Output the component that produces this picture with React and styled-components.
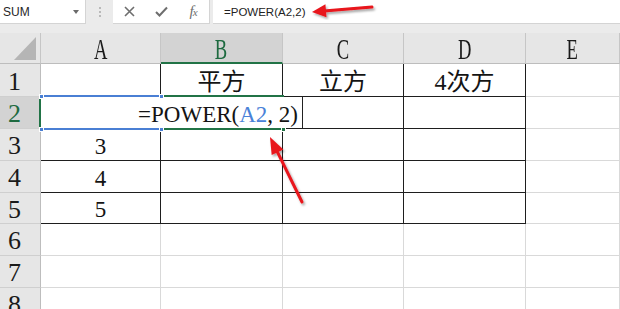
import React from 'react'
import styled, { createGlobalStyle } from 'styled-components'

const GlobalStyle = createGlobalStyle`
  html, body {
    margin: 0;
    padding: 0;
    background: #fff;
  }
  body {
    font-family: "Liberation Serif", "Noto Sans CJK SC", serif;
  }
`

const Page = styled.div`
  position: relative;
  width: 620px;
  height: 309px;
  overflow: hidden;
  background: #fff;
`

// ---- formula bar ----
const FormulaBar = styled.div`
  display: flex;
  align-items: flex-start;
  height: 33px;
  background: #ebebeb;
  font-family: "Liberation Sans", Arial, sans-serif;
  font-size: 12px;
  color: #262626;
`

const NameBox = styled.div`
  box-sizing: border-box;
  width: 86px;
  height: 24px;
  background: #fff;
  border-right: 1px solid #d4d4d4;
  border-bottom: 1px solid #d4d4d4;
  display: flex;
  align-items: center;
  justify-content: space-between;
  padding: 0 6px 0 3px;
`

const DropArrow = styled.span`
  width: 0;
  height: 0;
  border-left: 3.5px solid transparent;
  border-right: 3.5px solid transparent;
  border-top: 4px solid #6a6a6a;
`

const Grip = styled.div`
  width: 27px;
  height: 24px;
  display: flex;
  flex-direction: column;
  align-items: center;
  justify-content: center;
  gap: 2px;
`

const GripDot = styled.span`
  width: 2px;
  height: 2px;
  background: #b9b9b9;
`

const ButtonBox = styled.div`
  box-sizing: border-box;
  width: 97px;
  height: 24px;
  background: #fff;
  border-right: 1px solid #d4d4d4;
  border-bottom: 1px solid #d4d4d4;
  display: flex;
  align-items: center;
`

const IconBtn = styled.div`
  width: 32px;
  height: 24px;
  display: flex;
  align-items: center;
  justify-content: center;
  color: #6e6e6e;
`

const Fx = styled.span`
  font-family: "Liberation Serif", serif;
  font-style: italic;
  font-size: 15px;
  color: #6e6e6e;
  letter-spacing: -1px;
  & small {
    font-size: 11px;
  }
`

const FormulaInput = styled.div`
  box-sizing: border-box;
  flex: 1;
  margin-left: 3px;
  height: 24px;
  background: #fff;
  border-bottom: 1px solid #d4d4d4;
  display: flex;
  align-items: center;
  padding-left: 11px;
  font-size: 11.5px;
  color: #222;
`

// ---- sheet ----
const Sheet = styled.div`
  position: relative;
  display: grid;
  grid-template-columns: 41px 120px 122px 121px 122px 1fr;
  grid-template-rows: 31px 33px 32px 32px 32px 31px 32px 32px 32px;
`

const Corner = styled.div`
  box-sizing: border-box;
  background: #e6e6e6;
  border-right: 1px solid #c6c6c6;
  border-bottom: 1px solid #bdbdbd;
  display: flex;
  align-items: flex-end;
  justify-content: flex-end;
  padding: 0 4px 3px 0;
`

const CornerTriangle = styled.span`
  width: 0;
  height: 0;
  border-left: 22px solid transparent;
  border-bottom: 23px solid #b5b5b5;
`

const ColHead = styled.div`
  box-sizing: border-box;
  background: ${p => (p.$active ? '#d3d3d3' : '#e6e6e6')};
  color: ${p => (p.$active ? '#1e6a40' : '#1a1a1a')};
  border-right: 1px solid #c6c6c6;
  border-bottom: ${p => (p.$active ? '2px solid #217346' : '1px solid #bdbdbd')};
  display: flex;
  align-items: center;
  justify-content: center;
  padding-top: ${p => (p.$active ? '2px' : '1px')};
  overflow: hidden;
`

const HeadLabel = styled.span`
  display: inline-block;
  font-size: 30px;
  line-height: 1;
  transform: scaleX(0.62);
`

const RowHead = styled.div`
  box-sizing: border-box;
  background: ${p => (p.$active ? '#d3d3d3' : '#e6e6e6')};
  color: ${p => (p.$active ? '#1e6a40' : '#1a1a1a')};
  border-right: ${p => (p.$active ? '2px solid #217346' : '1px solid #bdbdbd')};
  border-bottom: 1px solid #cfcfcf;
  display: flex;
  align-items: center;
  padding: 3px 0 0 8px;
  font-size: 26px;
  line-height: 1;
`

const Cell = styled.div`
  box-sizing: border-box;
  border-right: 1px solid ${p => (p.$rightDark ? '#1e1e1e' : '#d9d9d9')};
  border-bottom: 1px solid ${p => (p.$bottomDark ? '#1e1e1e' : '#d9d9d9')};
  display: flex;
  align-items: center;
  justify-content: center;
  padding-top: 3px;
  font-size: ${p => (p.$cjk ? '24px' : '23px')};
  line-height: 1;
  color: #141414;
  white-space: nowrap;
`

// ---- overlays on the sheet ----
const SelectBox = styled.div`
  position: absolute;
  box-sizing: border-box;
  top: 62px;
  height: 35px;
  left: ${p => p.$left}px;
  width: ${p => p.$width}px;
  border: 2px solid ${p => p.$color};
  border-left-width: ${p => (p.$noLeft ? 0 : 2)}px;
  pointer-events: none;
`

const EditBox = styled.div`
  position: absolute;
  box-sizing: border-box;
  left: 142px;
  top: 64px;
  width: 161px;
  height: 31px;
  background: #fff;
  border-right: 1px solid #222;
  display: flex;
  align-items: center;
  justify-content: flex-end;
  padding: 3px 4px 0 0;
  font-size: 23px;
  line-height: 1;
  color: #141414;
  white-space: nowrap;
`

const RefText = styled.span`
  color: #4a82d8;
`

const Handle = styled.span`
  position: absolute;
  box-sizing: border-box;
  width: 5px;
  height: 5px;
  left: ${p => p.$x - 2}px;
  top: ${p => p.$y - 2}px;
  background: ${p => p.$color};
  border: 1px solid #fff;
`

const ArrowLayer = styled.svg`
  position: absolute;
  left: 0;
  top: 0;
  width: 620px;
  height: 309px;
  pointer-events: none;
`

const columns = ['A', 'B', 'C', 'D', 'E']
const rows = [1, 2, 3, 4, 5, 6, 7, 8]

const values = {
  B1: '平方',
  C1: '立方',
  D1: '4次方',
  A3: '3',
  A4: '4',
  A5: '5',
}

const inTable = (col, row) => {
  if (row < 1 || row > 5) return false
  if (col === 'B' || col === 'C' || col === 'D') return true
  return col === 'A' && row >= 3
}

const rightDark = (col, row) => inTable(col, row) || (col === 'A' && row <= 2)
const bottomDark = (col, row) => inTable(col, row) || (col === 'A' && row === 2)

const Arrow = ({ from, to, head = 14, half = 6 }) => {
  const dx = to[0] - from[0]
  const dy = to[1] - from[1]
  const len = Math.hypot(dx, dy)
  const ux = dx / len
  const uy = dy / len
  const bx = to[0] - ux * head
  const by = to[1] - uy * head
  const px = -uy * half
  const py = ux * half
  return (
    <g filter="url(#shadow)">
      <line x1={from[0]} y1={from[1]} x2={bx + ux * 2} y2={by + uy * 2} stroke="#e8141b" strokeWidth="3" strokeLinecap="round" />
      <polygon points={`${to[0]},${to[1]} ${bx + px},${by + py} ${bx - px},${by - py}`} fill="#e8141b" />
    </g>
  )
}

export default function App() {
  return (
    <Page>
      <GlobalStyle />
      <FormulaBar>
        <NameBox>
          <span>SUM</span>
          <DropArrow />
        </NameBox>
        <Grip>
          <GripDot />
          <GripDot />
          <GripDot />
        </Grip>
        <ButtonBox>
          <IconBtn>
            <svg width="11" height="11" viewBox="0 0 11 11">
              <path d="M1 1L10 10M10 1L1 10" stroke="currentColor" strokeWidth="1.6" fill="none" />
            </svg>
          </IconBtn>
          <IconBtn>
            <svg width="13" height="11" viewBox="0 0 13 11">
              <path d="M1 6L4.5 9.5L12 1.5" stroke="currentColor" strokeWidth="2" fill="none" />
            </svg>
          </IconBtn>
          <IconBtn>
            <Fx>f<small>x</small></Fx>
          </IconBtn>
        </ButtonBox>
        <FormulaInput>=POWER(A2,2)</FormulaInput>
      </FormulaBar>

      <Sheet>
        <Corner>
          <CornerTriangle />
        </Corner>
        {columns.map(c => (
          <ColHead key={c} $active={c === 'B'}>
            <HeadLabel>{c}</HeadLabel>
          </ColHead>
        ))}
        {rows.map(r => (
          <React.Fragment key={r}>
            <RowHead $active={r === 2}>{r}</RowHead>
            {columns.map(c => {
              const v = values[c + r]
              return (
                <Cell
                  key={c + r}
                  $rightDark={rightDark(c, r)}
                  $bottomDark={bottomDark(c, r)}
                  $cjk={v && /[^\x00-\x7f]/.test(v)}
                >
                  {v}
                </Cell>
              )
            })}
          </React.Fragment>
        ))}

        <SelectBox $left={41} $width={121} $color="#4a7fd4" $noLeft />
        <SelectBox $left={160} $width={124} $color="#217346" />
        <EditBox>
          =POWER(<RefText>A2</RefText>, 2)
        </EditBox>
        <Handle $x={41} $y={63} $color="#4a7fd4" />
        <Handle $x={161} $y={63} $color="#4a7fd4" />
        <Handle $x={41} $y={96} $color="#4a7fd4" />
        <Handle $x={161} $y={96} $color="#4a7fd4" />
        <Handle $x={283} $y={96} $color="#217346" />
      </Sheet>

      <ArrowLayer viewBox="0 0 620 309">
        <defs>
          <filter id="shadow" x="-20%" y="-20%" width="140%" height="140%">
            <feDropShadow dx="1.5" dy="2" stdDeviation="1.2" floodColor="#000" floodOpacity="0.35" />
          </filter>
        </defs>
        <Arrow from={[372, 7]} to={[312, 12]} head={14} half={6.5} />
        <Arrow from={[302, 202]} to={[270, 137]} head={17} half={6.5} />
      </ArrowLayer>
    </Page>
  )
}
